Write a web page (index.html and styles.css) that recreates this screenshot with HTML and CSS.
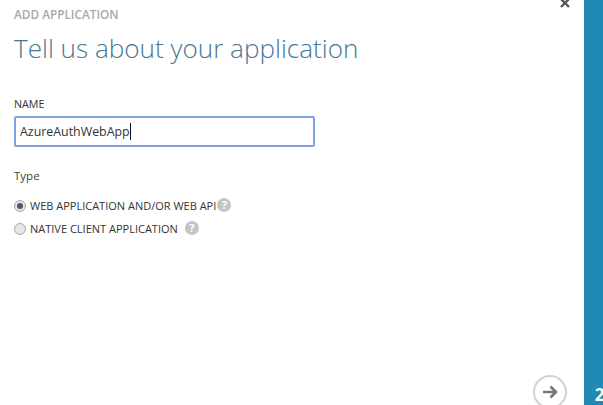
FILE: index.html
```html
<!DOCTYPE html>
<html lang="en">
<head>
    <meta charset="UTF-8">
    <meta name="viewport" content="width=device-width, initial-scale=1.0">
    <title>Add Application</title>
    <link rel="stylesheet" href="styles.css">
</head>
<body>
    <div class="dialog">
        <div class="main">
            <svg class="close" width="10" height="8" viewBox="0 0 10 8">
                <path d="M1 -1 L9 7 M9 -1 L1 7" stroke="#555" stroke-width="2.4" fill="none"/>
            </svg>
            <p class="crumb">ADD APPLICATION</p>
            <h1>Tell us about your application</h1>

            <label class="name-label" for="appName">NAME</label>
            <div class="name-input" id="appName">AzureAuthWebApp<span class="caret"></span></div>

            <p class="type-label">Type</p>
            <div class="option">
                <span class="radio checked"></span>
                <span class="option-text">WEB APPLICATION AND/OR WEB API</span>
                <span class="help">?</span>
            </div>
            <div class="option">
                <span class="radio"></span>
                <span class="option-text">NATIVE CLIENT APPLICATION</span>
                <span class="help gap">?</span>
            </div>

            <div class="footer">
                <div class="next">
                    <svg width="16" height="14" viewBox="0 0 16 14">
                        <path d="M1 7 H14 M8.5 1.5 L14 7 L8.5 12.5" stroke="#777" stroke-width="2.6" fill="none"/>
                    </svg>
                </div>
            </div>
        </div>
        <div class="steps">
            <span class="step">2</span>
        </div>
    </div>
</body>
</html>
```

FILE: styles.css
```css
html, body {
    margin: 0;
    padding: 0;
    height: 405px;
    overflow: hidden;
    background: #fff;
}

body {
    font-family: 'Open Sans', sans-serif;
    color: #333;
}

.dialog {
    display: flex;
    height: 405px;
}

.main {
    position: relative;
    flex: 1;
    display: flex;
    flex-direction: column;
    padding: 7px 0 0 14px;
}

.close {
    position: absolute;
    top: 0;
    right: 14px;
}

.crumb {
    margin: 0;
    font-size: 11.8px;
    line-height: 14px;
    font-weight: 600;
    color: #a3a9ad;
}

h1 {
    margin: 7px 0 0;
    font-size: 26.1px;
    line-height: 40px;
    font-weight: 300;
    color: #4a7793;
}

.name-label {
    margin-top: 29px;
    font-size: 10.7px;
    line-height: 14px;
    color: #333;
}

.name-input {
    display: flex;
    align-items: center;
    box-sizing: border-box;
    width: 301px;
    height: 31px;
    margin-top: 5px;
    padding-left: 4px;
    border: 2px solid #7da2e0;
    border-radius: 2px;
    font-size: 12.4px;
    color: #333;
}

.caret {
    width: 1px;
    height: 17px;
    background: #111;
}

.type-label {
    margin: 20px 0 0;
    font-size: 11.5px;
    line-height: 18px;
    color: #444;
}

.option {
    display: flex;
    align-items: center;
    height: 23px;
    font-size: 11px;
    color: #333;
}

.type-label + .option {
    margin-top: 9px;
}

.radio {
    box-sizing: border-box;
    display: flex;
    align-items: center;
    justify-content: center;
    width: 12px;
    height: 12px;
    margin-right: 4px;
    border: 1px solid #a8a8a8;
    border-radius: 50%;
    background: #e6e6e6;
}

.radio.checked::after {
    content: "";
    width: 6px;
    height: 6px;
    border-radius: 50%;
    background: #555;
}

.help {
    display: flex;
    align-items: center;
    justify-content: center;
    width: 14px;
    height: 14px;
    margin-left: 1px;
    margin-top: -2px;
    border-radius: 50%;
    background: #c4c4c4;
    color: #fff;
    font-size: 11px;
    font-weight: 700;
}

.help.gap {
    margin-left: 7px;
}

.footer {
    margin-top: auto;
    display: flex;
    justify-content: flex-end;
    padding-right: 17px;
    height: 30px;
}

.next {
    box-sizing: border-box;
    display: flex;
    align-items: center;
    justify-content: center;
    width: 34px;
    height: 34px;
    border: 2px solid #d3d3d3;
    border-radius: 50%;
}

.steps {
    width: 19px;
    background: #1e8ab5;
    display: flex;
    align-items: flex-end;
    justify-content: center;
    overflow: hidden;
}

.step {
    color: #fff;
    font-size: 17px;
    font-weight: 700;
    line-height: 20px;
    margin-left: 12px;
    margin-bottom: 0;
}
```
